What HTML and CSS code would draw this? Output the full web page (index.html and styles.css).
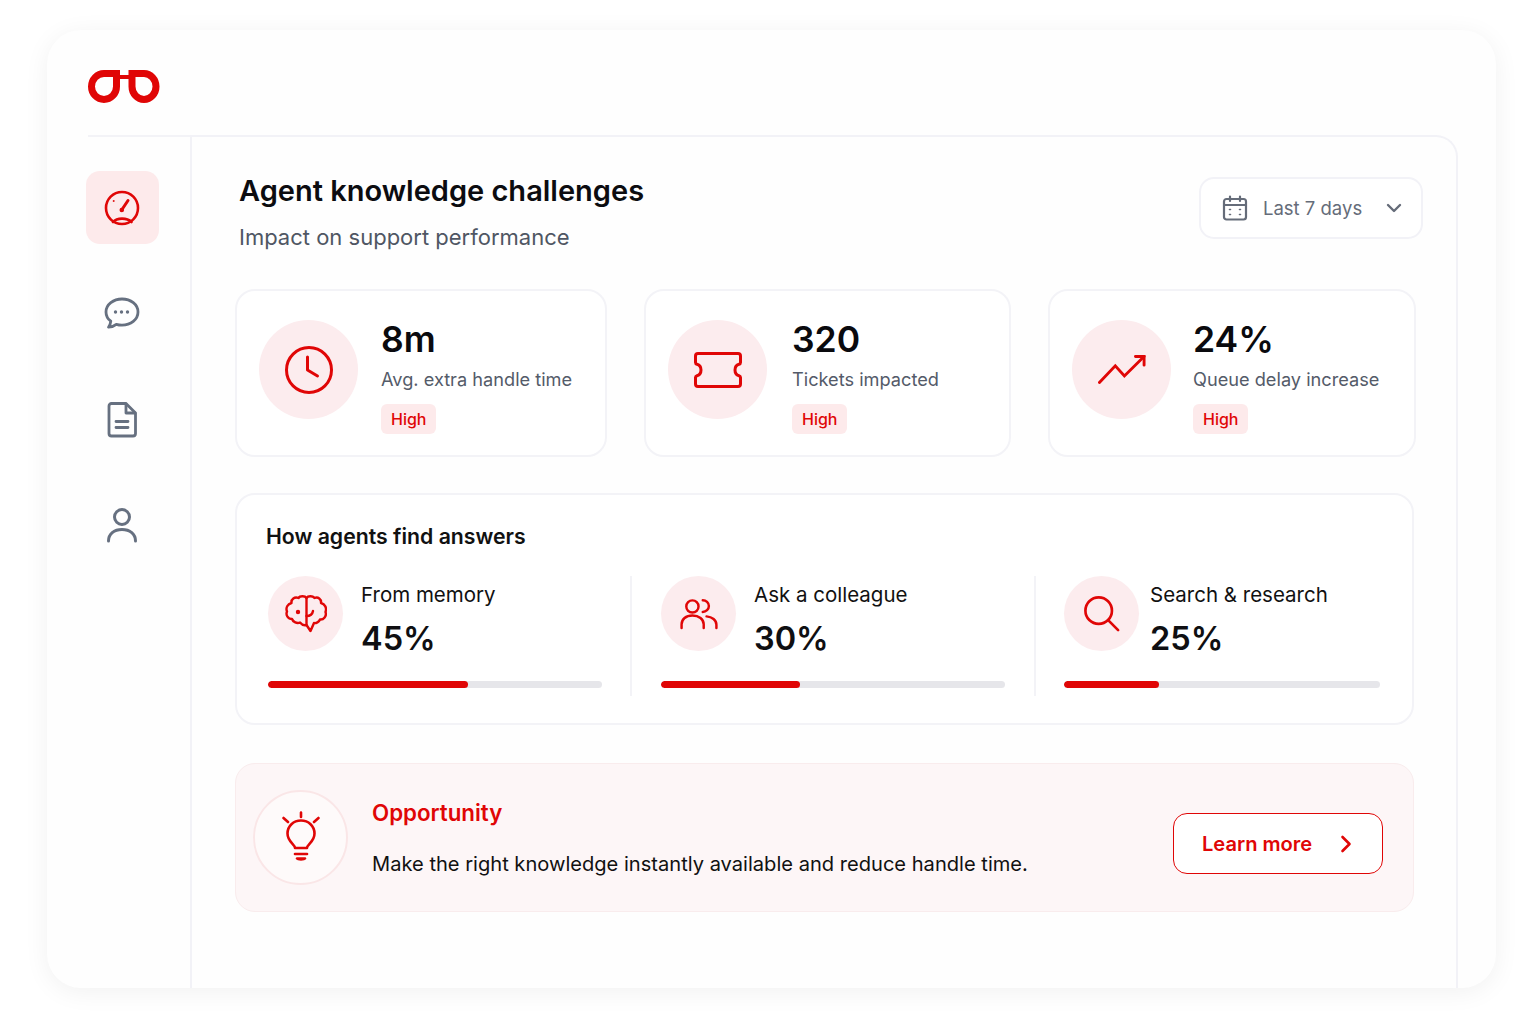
FILE: index.html
```html
<!DOCTYPE html>
<html lang="en">
<head>
    <meta charset="UTF-8">
    <meta name="viewport" content="width=device-width, initial-scale=1.0">
    <title>Agent knowledge challenges</title>
    <link rel="stylesheet" href="styles.css">
</head>
<body>
    <div class="app">
        <header class="topbar">
            <svg class="logo" width="72" height="36" viewBox="0 0 72 36" fill="none" stroke="#e00606" stroke-width="7" stroke-linejoin="miter">
                <path d="M28.500 4.500V17.500A12.500 13 0 1 1 16 4.500Z"/>
                <path d="M44 4.500H56A12 13 0 1 1 44 17.500Z"/>
                <path d="M28 8H44" stroke-width="4"/>
            </svg>
        </header>
        <div class="body-row">
            <nav class="sidebar">
                <a class="nav-item active">
                    <svg width="36" height="36" viewBox="0 0 36 36" fill="none" stroke="currentColor" stroke-width="2.600" stroke-linecap="round">
                        <circle cx="18" cy="18" r="16"/>
                        <path d="M18 19.500L24 10.500" stroke-width="3"/>
                        <circle cx="17.800" cy="20" r="2.300" fill="currentColor" stroke="none"/>
                        <path d="M9 32C13 27.500 23 27.500 27.500 32"/>
                        <circle cx="9.500" cy="11" r=".5" stroke-width="1"/>
                    </svg>
                </a>
                <a class="nav-item">
                    <svg width="36" height="36" viewBox="0 0 36 36" fill="none" stroke="currentColor" stroke-width="2.800" stroke-linecap="round" stroke-linejoin="round">
                        <path d="M18 3C9.500 3 2 8.500 2 16C2 19.800 3.800 23 6.800 25.200C6.600 27.500 5.700 29.500 4.500 31.200C7.500 31 10.200 30 12.300 28.300C14 28.800 16 29.100 18 29.100C26.800 29.100 34 23.500 34 16C34 8.500 26.800 3 18 3Z"/>
                        <circle cx="11.500" cy="16" r="1.700" fill="currentColor" stroke="none"/>
                        <circle cx="17.500" cy="16" r="1.700" fill="currentColor" stroke="none"/>
                        <circle cx="23.500" cy="16" r="1.700" fill="currentColor" stroke="none"/>
                    </svg>
                </a>
                <a class="nav-item">
                    <svg width="36" height="36" viewBox="0 0 36 36" fill="none" stroke="currentColor" stroke-width="2.800" stroke-linecap="round" stroke-linejoin="round">
                        <path d="M7.500 1.500H22L31.500 11V31.500C31.500 33.200 30.500 34 29 34H7.500C6 34 5 33.200 5 31.500V4C5 2.400 6 1.500 7.500 1.500Z"/>
                        <path d="M22 2V11H31"/>
                        <path d="M12 19.500H24M12 25.500H24"/>
                    </svg>
                </a>
                <a class="nav-item">
                    <svg width="36" height="36" viewBox="0 0 36 36" fill="none" stroke="currentColor" stroke-width="3" stroke-linecap="round">
                        <circle cx="18" cy="9" r="7.500"/>
                        <path d="M4.500 33C4.500 26 10 21.500 18 21.500C26 21.500 31.500 26 31.500 33"/>
                    </svg>
                </a>
            </nav>
            <main class="main">
                <div class="page-head">
                    <div class="page-titles">
                        <h1>Agent knowledge challenges</h1>
                        <p>Impact on support performance</p>
                    </div>
                    <div class="range-select">
                        <svg width="26" height="26" viewBox="0 0 26 26" fill="none" stroke="currentColor" stroke-width="2.200" stroke-linecap="round">
                            <rect x="2" y="4" width="22" height="20.500" rx="2.500"/>
                            <path d="M2 10H24M8 1.500V6M18 1.500V6"/>
                            <path d="M7.500 14.500H8.500M17.500 14.500H18.500M7.500 19.500H8.500M17.500 19.500H18.500" stroke-width="1.600"/>
                        </svg>
                        <span>Last 7 days</span>
                        <svg class="chev" width="16" height="10" viewBox="0 0 16 10" fill="none" stroke="currentColor" stroke-width="2.400" stroke-linecap="round" stroke-linejoin="round">
                            <path d="M2 2L8 8L14 2"/>
                        </svg>
                    </div>
                </div>

                <section class="metrics">
                    <div class="metric">
                        <div class="metric-icon">
                            <svg width="50" height="50" viewBox="0 0 50 50" fill="none" stroke="currentColor" stroke-width="3" stroke-linecap="round" stroke-linejoin="round">
                                <circle cx="25" cy="25" r="22.500"/>
                                <path d="M23.500 12V25L33.500 31"/>
                            </svg>
                        </div>
                        <div class="metric-text">
                            <div class="metric-value">8m</div>
                            <div class="metric-label">Avg. extra handle time</div>
                            <span class="badge">High</span>
                        </div>
                    </div>
                    <div class="metric">
                        <div class="metric-icon">
                            <svg width="50" height="38" viewBox="0 0 50 38" fill="none" stroke="currentColor" stroke-width="3" stroke-linejoin="round">
                                <path d="M5 2.500H45C46.500 2.500 47.500 3.500 47.500 5V11.500C47.500 12.500 47 13 46 13.300C43.500 14 42 16.300 42 19C42 21.700 43.500 24 46 24.700C47 25 47.500 25.500 47.500 26.500V33C47.500 34.500 46.500 35.500 45 35.500H5C3.500 35.500 2.500 34.500 2.500 33V26.500C2.500 25.500 3 25 4 24.700C6.500 24 8 21.700 8 19C8 16.300 6.500 14 4 13.300C3 13 2.500 12.500 2.500 11.500V5C2.500 3.500 3.500 2.500 5 2.500Z"/>
                            </svg>
                        </div>
                        <div class="metric-text">
                            <div class="metric-value">320</div>
                            <div class="metric-label">Tickets impacted</div>
                            <span class="badge">High</span>
                        </div>
                    </div>
                    <div class="metric">
                        <div class="metric-icon">
                            <svg width="48" height="29" viewBox="0 0 50 30" fill="none" stroke="currentColor" stroke-width="3" stroke-linecap="round">
                                <path d="M1.500 28.500L18 11.200L27.500 21.800L48 1.500"/>
                                <path d="M39 1.500H48V10.500"/>
                            </svg>
                        </div>
                        <div class="metric-text">
                            <div class="metric-value">24%</div>
                            <div class="metric-label">Queue delay increase</div>
                            <span class="badge">High</span>
                        </div>
                    </div>
                </section>

                <section class="answers">
                    <h2>How agents find answers</h2>
                    <div class="answer-row">
                        <div class="answer first">
                            <div class="answer-top">
                                <div class="answer-icon">
                                    <svg width="42" height="38" viewBox="0 0 42 38" fill="none" stroke="currentColor" stroke-width="2.400" stroke-linecap="round" stroke-linejoin="round">
                                        <path d="M21.500 30V3C20 .8 15 .6 13.500 3C9.500 1.500 6 4 6.500 8C2.500 9 .5 13 2 16.500C.5 20 3 24 7 24C8 27 12 29 15 27.500C17 30 19.500 30.500 21.500 30Z"/>
                                        <path d="M21.500 3C23 .8 27.500 .6 29.500 3C33 1.500 36.500 4 36 8C40 9 42 13 40.500 17C42 21 38.500 25 35 24.500C34 27 31 28.500 29 28L25.500 36L21.500 30"/>
                                        <path d="M21.500 21C25 21 27.500 19 28 16"/>
                                        <circle cx="13" cy="17" r="1" fill="currentColor"/>
                                    </svg>
                                </div>
                                <div>
                                    <div class="answer-label">From memory</div>
                                    <div class="answer-value">45%</div>
                                </div>
                            </div>
                            <div class="bar"><div class="bar-fill" style="width: 60%"></div></div>
                        </div>
                        <div class="answer second">
                            <div class="answer-top">
                                <div class="answer-icon">
                                    <svg width="38" height="32" viewBox="0 0 40 34" fill="none" stroke="currentColor" stroke-width="2.600" stroke-linecap="round">
                                        <circle cx="13" cy="9" r="6.500"/>
                                        <path d="M24 2.300C27.500 2.300 30.500 5 30.500 8.500C30.500 12 27.500 14.800 24 14.800"/>
                                        <path d="M1.500 32V28C1.500 22.500 6 18.500 13 18.500C20 18.500 25 22.500 25 28V32"/>
                                        <path d="M28 19.500C34 20 38.500 23.500 38.500 28.500V32"/>
                                    </svg>
                                </div>
                                <div>
                                    <div class="answer-label">Ask a colleague</div>
                                    <div class="answer-value">30%</div>
                                </div>
                            </div>
                            <div class="bar"><div class="bar-fill" style="width: 40.400%"></div></div>
                        </div>
                        <div class="answer third">
                            <div class="answer-top">
                                <div class="answer-icon">
                                    <svg width="36" height="36" viewBox="0 0 38 38" fill="none" stroke="currentColor" stroke-width="2.800" stroke-linecap="round">
                                        <circle cx="15.500" cy="15.500" r="14"/>
                                        <path d="M25.500 25.500L36 36"/>
                                    </svg>
                                </div>
                                <div>
                                    <div class="answer-label">Search &amp; research</div>
                                    <div class="answer-value">25%</div>
                                </div>
                            </div>
                            <div class="bar"><div class="bar-fill" style="width: 30%"></div></div>
                        </div>
                    </div>
                </section>

                <section class="opportunity">
                    <div class="bulb">
                        <svg width="38" height="50" viewBox="0 0 38 50" fill="none" stroke="currentColor" stroke-width="2.600" stroke-linecap="round" stroke-linejoin="round">
                            <path d="M19 1.500V6M1.500 7L6 11M36.500 7L32 11"/>
                            <path d="M13 37C13 33 5.500 31 5.500 22.500C5.500 15 11.500 9.500 19 9.500C26.500 9.500 32.500 15 32.500 22.500C32.500 31 25 33 25 37Z"/>
                            <path d="M13 43H25"/>
                            <path d="M15 47.500H23C22 48.800 16 48.800 15 47.500Z" fill="currentColor"/>
                        </svg>
                    </div>
                    <div class="opp-text">
                        <h3>Opportunity</h3>
                        <p>Make the right knowledge instantly available and reduce handle time.</p>
                    </div>
                    <button class="learn-more">
                        <span>Learn more</span>
                        <svg width="12" height="18" viewBox="0 0 12 18" fill="none" stroke="currentColor" stroke-width="2.600" stroke-linecap="round" stroke-linejoin="round">
                            <path d="M2.500 2L9.500 9L2.500 16"/>
                        </svg>
                    </button>
                </section>
            </main>
        </div>
    </div>
</body>
</html>
```

FILE: styles.css
```css
* {
    box-sizing: border-box;
}

body {
    margin: 0;
    height: 1024px;
    padding: 30px 40px 36px 47px;
    background: #fff;
    font-family: Inter, "Liberation Sans", sans-serif;
    color: #111;
    overflow: hidden;
}

h1, h2, h3, p {
    margin: 0;
}

.app {
    width: 1449px;
    height: 958px;
    background: #fefefe;
    border-radius: 34px;
    box-shadow: 0 4px 26px rgba(0, 0, 0, 0.06);
    padding-left: 41px;
    display: flex;
    flex-direction: column;
}

.topbar {
    height: 105px;
    padding-top: 39px;
    flex: none;
}

.logo {
    display: block;
}

.body-row {
    flex: 1;
    display: flex;
    min-height: 0;
}

/* Sidebar */
.sidebar {
    width: 102px;
    flex: none;
    border-top: 2px solid #f3f3f7;
    padding-top: 34px;
    display: flex;
    flex-direction: column;
    gap: 33px;
    color: #667080;
}

.nav-item {
    width: 73px;
    height: 73px;
    margin-left: -2px;
    padding-right: 2px;
    border-radius: 14px;
    display: flex;
    align-items: center;
    justify-content: center;
}

.nav-item.active {
    background: #fdeaeb;
    color: #e00606;
}

/* Main panel */
.main {
    width: 1268px;
    flex: none;
    border: 2px solid #f2f2f7;
    border-bottom: none;
    border-top-right-radius: 22px;
    padding: 34px 0 0 43px;
}

.page-head {
    display: flex;
    justify-content: space-between;
    align-items: flex-start;
    width: 1188px;
    height: 118px;
}

.page-titles {
    padding-left: 4px;
}

h1 {
    font-size: 29px;
    line-height: 40px;
    font-weight: 600;
    color: #0c0c10;
}

.page-titles p {
    margin-top: 10px;
    font-size: 22px;
    line-height: 32px;
    color: #4f5663;
}

.range-select {
    width: 224px;
    height: 62px;
    margin-top: 6px;
    border: 2px solid #f2f2f7;
    border-radius: 15px;
    background: #fff;
    padding-left: 21px;
    display: flex;
    align-items: center;
    color: #656c79;
    font-size: 18.500px;
}

.range-select span {
    margin-left: 15px;
}

.chev {
    margin-left: 24px;
}

/* Metric cards */
.metrics {
    display: grid;
    grid-template-columns: 372px 367px 368px;
    gap: 37px;
}

.metric {
    height: 168px;
    border: 2px solid #f3f3f7;
    border-radius: 20px;
    background: #fff;
    padding: 29px 0 0 22px;
    display: flex;
}

.metric:nth-child(2) .metric-text {
    margin-left: 25px;
}

.metric:nth-child(3) .metric-text {
    margin-left: 22px;
}

.metric-icon {
    width: 99px;
    height: 99px;
    flex: none;
    border-radius: 50%;
    background: #fcecee;
    color: #e00606;
    display: flex;
    align-items: center;
    justify-content: center;
}

.metric-text {
    margin-left: 23px;
    margin-top: -2px;
}

.metric-value {
    font-size: 35.500px;
    line-height: 44px;
    font-weight: 600;
    color: #0a0a0e;
}

.metric-label {
    margin-top: 3px;
    font-size: 18.200px;
    line-height: 28px;
    color: #545b69;
}

.badge {
    display: inline-block;
    margin-top: 11px;
    padding: 0 10px;
    height: 30px;
    line-height: 30px;
    border-radius: 6px;
    background: #fdeaeb;
    color: #e00606;
    font-size: 16px;
    font-weight: 500;
}

/* How agents find answers */
.answers {
    width: 1179px;
    height: 232px;
    margin-top: 36px;
    border: 2px solid #f3f3f7;
    border-radius: 20px;
    background: #fff;
    padding: 26px 0 0 29px;
}

h2 {
    font-size: 21.250px;
    line-height: 30px;
    font-weight: 600;
    color: #111;
}

.answer-row {
    display: flex;
    margin-top: 25px;
    height: 120px;
}

.answer {
    display: flex;
    flex-direction: column;
    justify-content: space-between;
    padding-bottom: 8px;
}

.answer.first {
    width: 366px;
    padding-left: 2px;
    padding-right: 28px;
    border-right: 2px solid #f3f3f7;
}

.answer.second {
    width: 404px;
    padding-left: 29px;
    padding-right: 29px;
    border-right: 2px solid #f3f3f7;
}

.answer.third {
    width: 344px;
    padding-left: 28px;
}

.answer.third .answer-icon {
    margin-right: 11px;
}

.answer-top {
    display: flex;
}

.answer-icon {
    width: 75px;
    height: 75px;
    flex: none;
    border-radius: 50%;
    background: #fcecee;
    color: #e00606;
    display: flex;
    align-items: center;
    justify-content: center;
    margin-right: 18px;
}

.answer-label {
    font-size: 20.500px;
    line-height: 38px;
    color: #111;
}

.answer-value {
    margin-top: 2px;
    font-size: 32.500px;
    line-height: 46px;
    font-weight: 600;
    color: #0f0f12;
}

.bar {
    height: 7px;
    border-radius: 4px;
    background: #e6e6ea;
    overflow: hidden;
}

.bar-fill {
    height: 100%;
    border-radius: 4px;
    background: #e00606;
}

/* Opportunity banner */
.opportunity {
    width: 1179px;
    height: 149px;
    margin-top: 38px;
    border: 1px solid #f9eced;
    border-radius: 20px;
    background: #fdf6f7;
    padding-left: 17px;
    display: flex;
    align-items: center;
}

.bulb {
    width: 95px;
    height: 95px;
    flex: none;
    border: 2px solid #fae6e7;
    border-radius: 50%;
    background: #fefafa;
    color: #e00606;
    display: flex;
    align-items: center;
    justify-content: center;
    padding-bottom: 4px;
}

.opp-text {
    margin-left: 24px;
    width: 801px;
}

h3 {
    font-size: 22.300px;
    line-height: 32px;
    font-weight: 600;
    color: #e00606;
}

.opp-text p {
    margin-top: 20px;
    font-size: 20.100px;
    line-height: 30px;
    color: #111;
}

.learn-more {
    width: 210px;
    height: 61px;
    margin-top: 12px;
    padding: 0 0 0 28px;
    border: 1.500px solid #e00606;
    border-radius: 14px;
    background: #fff;
    color: #e00606;
    font-family: inherit;
    font-size: 20.100px;
    font-weight: 600;
    display: flex;
    align-items: center;
    gap: 28px;
}
```
